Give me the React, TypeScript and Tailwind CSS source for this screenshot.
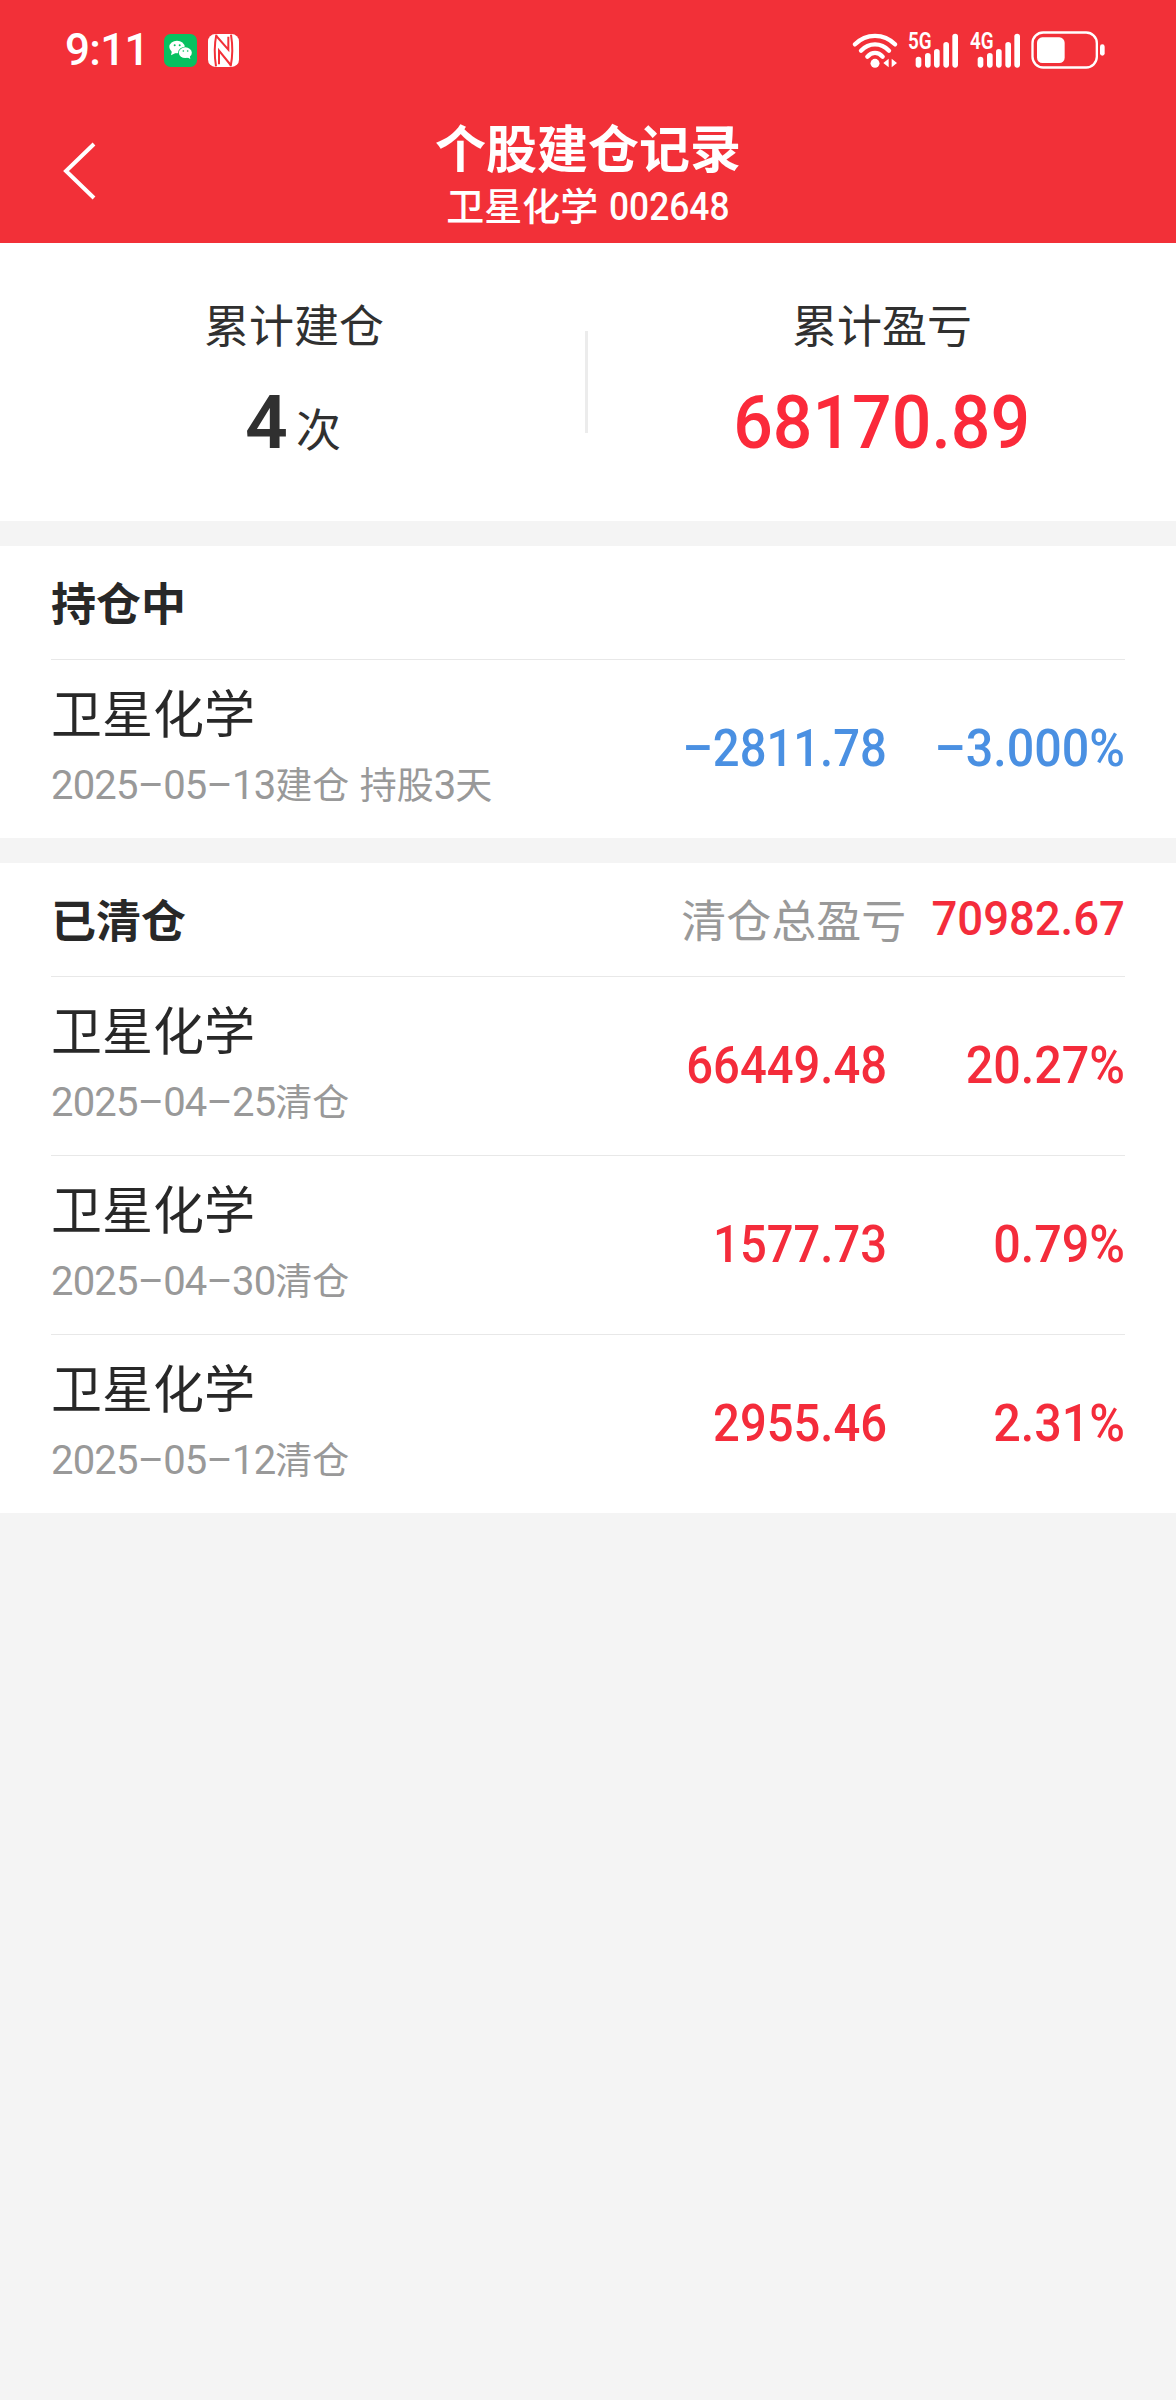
import React from "react";

type RecordItem = {
  id: number;
  name: string;
  desc: string;
  amount: string;
  percent: string;
};

const holdingList: RecordItem[] = [
  { id: 1, name: "卫星化学", desc: "2025–05–13建仓 持股3天", amount: "–2811.78", percent: "–3.000%" },
];

const clearedList: RecordItem[] = [
  { id: 2, name: "卫星化学", desc: "2025–04–25清仓", amount: "66449.48", percent: "20.27%" },
  { id: 3, name: "卫星化学", desc: "2025–04–30清仓", amount: "1577.73", percent: "0.79%" },
  { id: 4, name: "卫星化学", desc: "2025–05–12清仓", amount: "2955.46", percent: "2.31%" },
];

const WechatIcon = () => (
  <svg width="33" height="33" viewBox="0 0 99 99">
    <rect width="99" height="99" rx="20" fill="#07c160" />
    <ellipse cx="39" cy="39" rx="23" ry="19" fill="#fff" />
    <path d="M24 50l-3 14 14-7z" fill="#fff" />
    <ellipse cx="64" cy="56" rx="22" ry="18" fill="#07c160" />
    <ellipse cx="64" cy="56" rx="19.5" ry="16" fill="#fff" />
    <path d="M68 69l11 6-2-11z" fill="#fff" />
    <circle cx="32" cy="34" r="3" fill="#07c160" />
    <circle cx="47" cy="34" r="3" fill="#07c160" />
    <circle cx="58" cy="51" r="2.5" fill="#07c160" />
    <circle cx="71" cy="51" r="2.5" fill="#07c160" />
  </svg>
);

const NfcIcon = () => (
  <svg width="31" height="33" viewBox="0 0 93 99">
    <rect width="93" height="99" rx="22" fill="#fff" />
    <g fill="none" stroke="#f23038" strokeWidth="6">
      <path d="M25 2C19 32 19 66 24 97" />
      <path d="M68 97c6-30 6-65 1-95" />
      <path d="M25 6L61 47V8" />
      <path d="M68 93L33 50v41" />
    </g>
  </svg>
);

const WifiIcon = () => (
  <svg width="46" height="37" viewBox="62 62 138 111">
    <g fill="none" stroke="#fff" strokeWidth="13" strokeLinecap="round">
      <path d="M71 99C104 65 158 65 191 99" />
      <path d="M89 118c24-25 60-25 84 0" />
      <path d="M108 136c14-15 32-15 46 0" />
    </g>
    <circle cx="131" cy="156" r="13.5" fill="#fff" />
    <path d="M156 155l16-13v26zM197 155l-16-13v26z" fill="#fff" />
  </svg>
);

const SignalIcon = ({ label }: { label: string }) => (
  <div className="relative h-[37px] w-[52px]">
    <svg width="52" height="37" viewBox="230 62 156 111" fill="#fff">
      <rect x="256" y="136" width="17" height="33" rx="8.5" />
      <rect x="284" y="125" width="17" height="44" rx="8.5" />
      <rect x="311" y="113" width="17" height="56" rx="8.5" />
      <rect x="339" y="92" width="17" height="77" rx="8.5" />
      <rect x="366" y="67" width="17" height="102" rx="8.5" />
    </svg>
    <span className="absolute left-px top-[-3px] origin-left scale-x-[0.82] font-['Roboto',sans-serif] text-[23px] font-semibold leading-[26px]">
      {label}
    </span>
  </div>
);

const BatteryIcon = () => (
  <svg width="74" height="38" viewBox="604 61 222 114">
    <rect x="608.5" y="65.5" width="193" height="105" rx="32" fill="none" stroke="#fff" strokeWidth="7" />
    <rect x="622" y="80" width="83" height="77" rx="16" fill="#fff" />
    <rect x="811" y="101" width="14" height="34" rx="7" fill="#fff" />
  </svg>
);

const StatusBar = () => (
  <div className="flex h-[100px] items-center justify-between pl-[65px] pr-[71px]">
    <div className="flex items-center">
      <span className="w-[99px] font-['Roboto',sans-serif] text-[44px] font-medium leading-[50px] tracking-[-0.7px]">
        9:11
      </span>
      <WechatIcon />
      <div className="w-[11px]" />
      <NfcIcon />
    </div>
    <div className="flex items-center">
      <WifiIcon />
      <div className="w-[9px]" />
      <SignalIcon label="5G" />
      <div className="w-[10px]" />
      <SignalIcon label="4G" />
      <div className="w-[10px]" />
      <BatteryIcon />
    </div>
  </div>
);

const Header = () => (
  <header className="h-[243px] bg-[#f23038] text-white">
    <StatusBar />
    <div className="grid grid-cols-[200px_1fr_200px]">
      <div className="pl-[61px] pt-[40px]">
        <svg width="36" height="62" viewBox="0 0 36 62" fill="none" stroke="#fff" strokeWidth="4">
          <path d="M33 4L5 31l28 27" />
        </svg>
      </div>
      <div className="flex flex-col items-center pt-[16px]">
        <h1 className="text-[51px] font-bold leading-[60px]">个股建仓记录</h1>
        <div className="mt-[6px] flex items-baseline text-[38px] font-medium leading-[44px]">
          <span>卫星化学</span>
          <span className="ml-[11px] mr-[-9px] origin-left scale-x-[0.93] font-['Roboto',sans-serif]">002648</span>
        </div>
      </div>
    </div>
  </header>
);

const Summary = () => (
  <section className="flex h-[278px] bg-white text-[#303030]">
    <div className="flex flex-1 flex-col items-center pt-[51px]">
      <span className="text-[45px] leading-[60px]">累计建仓</span>
      <div className="mt-[23px] flex items-start pr-[2px]">
        <span className="font-['Roboto',sans-serif] text-[75px] font-semibold leading-[90px]">4</span>
        <span className="ml-[8px] mt-[21px] text-[45px] leading-[60px]">次</span>
      </div>
    </div>
    <div className="-ml-[3px] mt-[88px] h-[102px] w-[3px] bg-[#ececec]" />
    <div className="flex flex-1 flex-col items-center pt-[51px]">
      <span className="text-[45px] leading-[60px]">累计盈亏</span>
      <span className="mt-[23px] scale-x-[0.93] font-['Roboto',sans-serif] text-[75px] font-medium leading-[90px] text-[#fb2a3a]">
        68170.89
      </span>
    </div>
  </section>
);

// Digits and Chinese text use different fonts, so split them into runs
const MixedText = ({ text }: { text: string }) => (
  <div className="mt-[18px] flex items-baseline whitespace-pre text-[37px] leading-[48px] text-[#999] [word-spacing:2px]">
    {text.split(/([\d–]+)/).map((part, index) =>
      /\d/.test(part) ? (
        <span key={index} className="font-['Roboto',sans-serif] text-[40px] tracking-[-0.8px]">
          {part}
        </span>
      ) : (
        <span key={index}>{part}</span>
      )
    )}
  </div>
);

const RecordRow = ({ item }: { item: RecordItem }) => (
  <div
    className={`flex h-[179px] border-t border-[#e8e8e8] ${
      item.amount.startsWith("–") ? "text-[#4a90e2]" : "text-[#f42c3b]"
    }`}
  >
    <div className="flex-1 pt-[21px]">
      <div className="text-[51px] leading-[60px] text-[#282828]">{item.name}</div>
      <MixedText text={item.desc} />
    </div>
    <div className="flex items-center font-['Roboto',sans-serif] text-[51px] font-medium">
      <span className="origin-right scale-x-[0.925]">{item.amount}</span>
      <span className="w-[238px] origin-right scale-x-[0.95] text-right">{item.percent}</span>
    </div>
  </div>
);

const SectionTitle = ({ title, children }: { title: string; children?: React.ReactNode }) => (
  <div className="flex h-[113px] items-center justify-between pb-[2px]">
    <h2 className="text-[45px] font-bold leading-[60px] text-[#282828]">{title}</h2>
    {children}
  </div>
);

const App = () => {
  return (
    <div className="min-h-[2400px] w-[1176px] bg-[#f4f4f4] font-['Noto_Sans_CJK_SC',sans-serif]">
      <Header />
      <Summary />

      <section className="mt-[25px] bg-white px-[51px]">
        <SectionTitle title="持仓中" />
        {holdingList.map((item) => (
          <RecordRow key={item.id} item={item} />
        ))}
      </section>

      <section className="mt-[25px] bg-white px-[51px]">
        <SectionTitle title="已清仓">
          <div className="flex items-center">
            <span className="text-[45px] leading-[60px] text-[#999]">清仓总盈亏</span>
            <span className="ml-[11px] origin-right scale-x-[0.93] font-['Roboto',sans-serif] text-[49px] font-medium leading-[60px] tracking-[-0.1px] text-[#f42c3b]">
              70982.67
            </span>
          </div>
        </SectionTitle>
        {clearedList.map((item) => (
          <RecordRow key={item.id} item={item} />
        ))}
      </section>
    </div>
  );
};

export default App;
